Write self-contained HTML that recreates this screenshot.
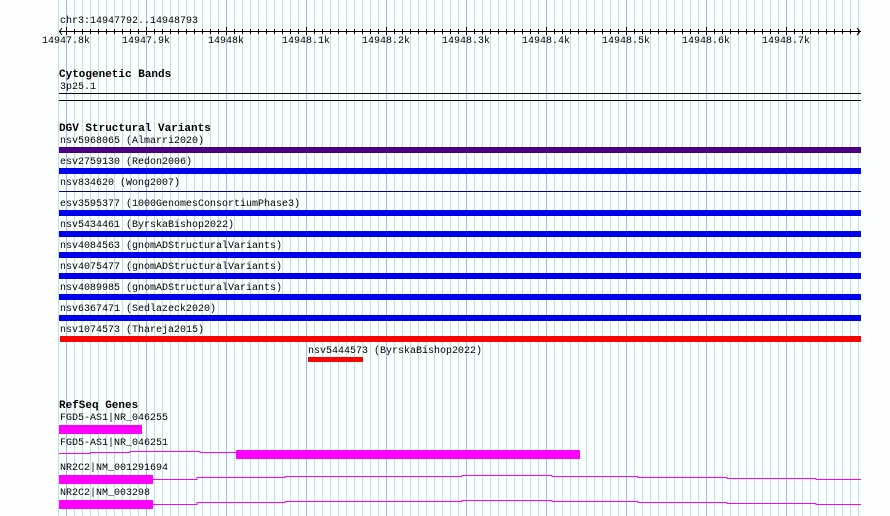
<!DOCTYPE html>
<html><head><meta charset="utf-8"><style>
html,body{margin:0;padding:0;background:#fdfffd;}
body{width:890px;height:516px;overflow:hidden;position:relative;}
svg{position:absolute;left:0;top:0;}
text{font-family:"Liberation Mono","DejaVu Sans Mono",monospace;font-size:10px;fill:#000;}
.b{font-weight:bold;font-size:11px;}
</style></head><body>
<svg width="890" height="516" xmlns="http://www.w3.org/2000/svg">
<defs>
<pattern id="minor" x="58" y="0" width="8" height="516" patternUnits="userSpaceOnUse"><rect x="0" y="0" width="1" height="516" fill="#aee8ec"/></pattern>
<pattern id="major" x="66" y="0" width="80" height="516" patternUnits="userSpaceOnUse"><rect x="0" y="0" width="1" height="516" fill="#8ec4ee"/></pattern>
<pattern id="tick" x="66" y="0" width="8" height="40" patternUnits="userSpaceOnUse"><rect x="0" y="29" width="1" height="5" fill="#000"/></pattern>
<pattern id="mtick" x="66" y="0" width="80" height="40" patternUnits="userSpaceOnUse"><rect x="0" y="27" width="1" height="8" fill="#000"/></pattern>
</defs>
<rect x="58" y="0" width="804" height="516" fill="url(#minor)"/>
<rect x="66" y="0" width="796" height="516" fill="url(#major)"/>
<!-- ruler -->
<text x="60" y="23">chr3:14947792..14948793</text>
<rect x="66" y="27" width="793" height="8" fill="url(#tick)"/>
<rect x="66" y="27" width="793" height="8" fill="url(#mtick)"/>
<rect x="59" y="31" width="802" height="1" fill="#000"/>
<path d="M62 28 L59.5 31.5 L62 35 M857 28 L860 31.5 L857 35" stroke="#000" fill="none"/>
<g text-anchor="middle">
<text x="66" y="43">14947.8k</text>
<text x="146" y="43">14947.9k</text>
<text x="226" y="43">14948k</text>
<text x="306" y="43">14948.1k</text>
<text x="386" y="43">14948.2k</text>
<text x="466" y="43">14948.3k</text>
<text x="546" y="43">14948.4k</text>
<text x="626" y="43">14948.5k</text>
<text x="706" y="43">14948.6k</text>
<text x="786" y="43">14948.7k</text>
</g>
<!-- cyto -->
<text x="59" y="77" class="b">Cytogenetic Bands</text>
<text x="60" y="89">3p25.1</text>
<rect x="59" y="93" width="802" height="1" fill="#000"/>
<rect x="59" y="100" width="802" height="1" fill="#000"/>
<!-- DGV -->
<text x="59" y="131" class="b">DGV Structural Variants</text>
<text x="60" y="143">nsv5968065 (Almarri2020)</text>
<rect x="59" y="147" width="802" height="6" fill="#4b0081"/>
<text x="60" y="164">esv2759130 (Redon2006)</text>
<rect x="59" y="168" width="802" height="6" fill="#0000ee"/>
<text x="60" y="185">nsv834620 (Wong2007)</text>
<rect x="59" y="191" width="802" height="1" fill="#000080"/>
<text x="60" y="206">esv3595377 (1000GenomesConsortiumPhase3)</text>
<rect x="59" y="210" width="802" height="6" fill="#0000ee"/>
<text x="60" y="227">nsv5434461 (ByrskaBishop2022)</text>
<rect x="59" y="231" width="802" height="6" fill="#0000ee"/>
<text x="60" y="248">nsv4084563 (gnomADStructuralVariants)</text>
<rect x="59" y="252" width="802" height="6" fill="#0000ee"/>
<text x="60" y="269">nsv4075477 (gnomADStructuralVariants)</text>
<rect x="59" y="273" width="802" height="6" fill="#0000ee"/>
<text x="60" y="290">nsv4089985 (gnomADStructuralVariants)</text>
<rect x="59" y="294" width="802" height="6" fill="#0000ee"/>
<text x="60" y="311">nsv6367471 (Sedlazeck2020)</text>
<rect x="59" y="315" width="802" height="6" fill="#0000ee"/>
<text x="60" y="332">nsv1074573 (Thareja2015)</text>
<rect x="60" y="336" width="801" height="6" fill="#ff0000"/>
<text x="308" y="353">nsv5444573 (ByrskaBishop2022)</text>
<rect x="308" y="357" width="55" height="5" fill="#ff0000"/>
<!-- RefSeq -->
<text x="59" y="408" class="b">RefSeq Genes</text>
<text x="60" y="420">FGD5-AS1|NR_046255</text>
<rect x="59" y="425" width="83" height="9" fill="#ff00ff"/>
<text x="60" y="445">FGD5-AS1|NR_046251</text>
<path d="M59 453.5H90V452.5H130V451.5H175V451.5H200V452.5H236" stroke="#ff00ff" fill="none"/>
<rect x="236" y="450" width="344" height="9" fill="#ff00ff"/>
<text x="60" y="470">NR2C2|NM_001291694</text>
<rect x="59" y="475" width="94" height="9" fill="#ff00ff"/>
<path d="M153 479.5H197V477.5H285V476.5H462V475.5H552V476.5H638V477.5H727V478.5H816V479.5H861" stroke="#ff00ff" fill="none"/>
<text x="60" y="495">NR2C2|NM_003298</text>
<rect x="59" y="500" width="94" height="9" fill="#ff00ff"/>
<path d="M153 504.5H197V502.5H285V501.5H462V500.5H552V501.5H638V502.5H727V503.5H816V504.5H861" stroke="#ff00ff" fill="none"/>
</svg>
</body></html>
